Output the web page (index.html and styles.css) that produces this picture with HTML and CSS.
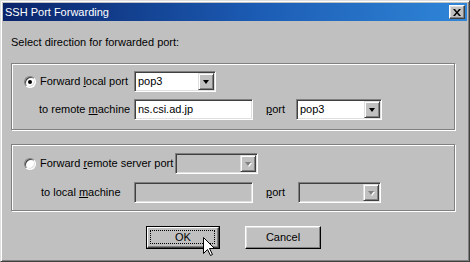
FILE: index.html
```html
<!DOCTYPE html>
<html>
<head>
<meta charset="utf-8">
<link rel="stylesheet" href="styles.css">
</head>
<body>
<div class="window">
  <div class="titlebar">
    <span class="title">SSH Port Forwarding</span>
    <span class="close"><svg width="8" height="7" viewBox="0 0 8 7"><path d="M0 0h2l2 2.5L6 0h2L5 3.5 8 7H6L4 4.5 2 7H0l3-3.5z" fill="#000"/></svg></span>
  </div>
  <div class="content">
    <div class="prompt">Select direction for forwarded port:</div>

    <div class="group g1">
      <div class="row">
        <span class="radio checked"></span>
        <span class="lbl l-local">Forward <u>l</u>ocal port</span>
        <div class="combo c-pop-a"><span class="val">pop3</span><span class="drop"><span class="tri"></span></span></div>
      </div>
      <div class="row">
        <span class="lbl l-to">to remote <u>m</u>achine</span>
        <div class="edit"><span class="val">ns.csi.ad.jp</span></div>
        <span class="lbl l-port"><u>p</u>ort</span>
        <div class="combo c-pop-b"><span class="val">pop3</span><span class="drop"><span class="tri"></span></span></div>
      </div>
    </div>

    <div class="group g2">
      <div class="row">
        <span class="radio"></span>
        <span class="lbl l-remote">Forward <u>r</u>emote server port</span>
        <div class="combo disabled c-rem"><span class="val"></span><span class="drop"><span class="tri"></span></span></div>
      </div>
      <div class="row">
        <span class="lbl l-to2">to local <u>m</u>achine</span>
        <div class="edit disabled"><span class="val"></span></div>
        <span class="lbl l-port2"><u>p</u>ort</span>
        <div class="combo disabled c-port2"><span class="val"></span><span class="drop"><span class="tri"></span></span></div>
      </div>
    </div>

    <div class="buttons">
      <div class="btn default"><span class="focus">OK</span></div>
      <div class="btn cancel"><span class="face">Cancel</span></div>
    </div>
  </div>
  <svg class="cursor" width="12" height="19" viewBox="0 0 12 19"><path d="M0.5 0.5V16.5L4.5 12.5L7.5 18.5L9.5 17.5L6.5 11.5H11.5Z" fill="#fff" stroke="#000" stroke-width="1" stroke-linejoin="miter"/></svg>
</div>
</body>
</html>
```
FILE: styles.css
```css
html, body {
  margin: 0;
  padding: 0;
  background: #c0c0c0;
}
.window {
  position: relative;
  width: 470px;
  height: 262px;
  box-sizing: border-box;
  padding: 1px;
  background: #c0c0c0;
  border-top: 1px solid #dfdfdf;
  border-left: 1px solid #dfdfdf;
  border-right: 1px solid #404040;
  border-bottom: 1px solid #404040;
  box-shadow: inset 1px 1px 0 #ffffff, inset -1px -1px 0 #808080;
  font-family: "Liberation Sans", Arial, sans-serif;
  font-size: 11px;
  color: #000;
  overflow: hidden;
}
.titlebar {
  margin: 1px;
  height: 18px;
  display: flex;
  align-items: center;
  background: linear-gradient(to right, #0a246a 0%, #1c5cb4 55%, #2f86d8 100%);
  color: #fff;
  padding-left: 2px;
}
.title {
  flex: 1;
  font-size: 11px;
  line-height: 18px;
  letter-spacing: 0;
}
.close {
  width: 16px;
  height: 14px;
  box-sizing: border-box;
  margin-right: 2px;
  background: #c0c0c0;
  border-top: 1px solid #ffffff;
  border-left: 1px solid #ffffff;
  border-right: 1px solid #404040;
  border-bottom: 1px solid #404040;
  box-shadow: inset -1px -1px 0 #808080, inset 1px 1px 0 #dfdfdf;
  display: flex;
  align-items: center;
  justify-content: center;
}
.close svg { display: block; margin-left: -1px; }
.content {
  padding: 14px 0 0 9px;
}
.prompt {
  line-height: 13px;
  height: 13px;
  padding-left: 0;
}
.group {
  margin-top: 14px;
  width: 444px;
  height: 67px;
  box-sizing: border-box;
  border: 1px solid #808080;
  box-shadow: inset 1px 1px 0 #ffffff, 1px 1px 0 #ffffff;
  display: flex;
  flex-direction: column;
  padding-top: 7px;
  gap: 7px;
}
.g2 {
  padding-top: 8px;
  gap: 8px;
}
.row {
  display: flex;
  align-items: center;
  height: 21px;
  padding-left: 12px;
}
.lbl {
  line-height: 13px;
  white-space: nowrap;
}
.radio {
  position: relative;
  width: 12px;
  height: 12px;
  box-sizing: border-box;
  border-radius: 50%;
  background: #fff;
  border: 1px solid;
  border-color: #808080 #ffffff #ffffff #808080;
  box-shadow: inset 1px 1px 0 #404040, inset -1px -1px 0 #dfdfdf;
  margin-right: 4px;
}
.radio.checked::after {
  content: "";
  position: absolute;
  left: 3px;
  top: 3px;
  width: 4px;
  height: 4px;
  border-radius: 50%;
  background: #000;
}
.l-local { width: 94px; }
.l-remote { width: 135px; }
.l-to { width: 95px; margin-left: 15px; }
.l-to2 { width: 93px; margin-left: 17px; }
.l-port { width: 30px; margin-left: 13px; }
.l-port2 { width: 32px; margin-left: 13px; }

.combo, .edit {
  height: 21px;
  box-sizing: border-box;
  background: #fff;
  border: 1px solid;
  border-color: #808080 #ffffff #ffffff #808080;
  box-shadow: inset 1px 1px 0 #404040, inset -1px -1px 0 #dfdfdf;
  display: flex;
  align-items: center;
  padding: 1px;
}
.combo.disabled, .edit.disabled { background: #c0c0c0; }
.val {
  flex: 1;
  padding-left: 2px;
  line-height: 17px;
}
.edit { width: 119px; }
.c-pop-a { width: 82px; }
.c-pop-b { width: 86px; }
.c-rem { width: 83px; }
.c-port2 { width: 83px; }
.drop {
  width: 16px;
  height: 17px;
  box-sizing: border-box;
  background: #c0c0c0;
  border-top: 1px solid #dfdfdf;
  border-left: 1px solid #dfdfdf;
  border-right: 1px solid #404040;
  border-bottom: 1px solid #404040;
  box-shadow: inset 1px 1px 0 #ffffff, inset -1px -1px 0 #808080;
  display: flex;
  align-items: center;
  justify-content: center;
}
.tri {
  width: 0;
  height: 0;
  border-left: 3.5px solid transparent;
  border-right: 3.5px solid transparent;
  border-top: 4px solid #000;
}
.disabled .tri {
  border-top-color: #808080;
  filter: drop-shadow(1px 1px 0 #ffffff);
}

.buttons {
  display: flex;
  margin-top: 15px;
  padding-left: 135px;
  gap: 25px;
}
.btn {
  height: 23px;
  box-sizing: border-box;
  background: #c0c0c0;
  text-align: center;
  line-height: 13px;
}
.btn.default {
  width: 74px;
  border: 1px solid #000;
  padding: 0;
}
.btn.default .focus {
  display: block;
  height: 21px;
  box-sizing: border-box;
  border-top: 1px solid #ffffff;
  border-left: 1px solid #ffffff;
  border-right: 1px solid #404040;
  border-bottom: 1px solid #404040;
  box-shadow: inset -1px -1px 0 #808080;
  position: relative;
  line-height: 19px;
}
.btn.default .focus::before {
  content: "";
  position: absolute;
  left: 2px;
  top: 2px;
  right: 3px;
  bottom: 3px;
  border: 1px dotted #000;
}
.btn.cancel {
  width: 76px;
  border-top: 1px solid #ffffff;
  border-left: 1px solid #ffffff;
  border-right: 1px solid #000;
  border-bottom: 1px solid #000;
  box-shadow: inset -1px -1px 0 #808080, inset 1px 1px 0 #dfdfdf;
  line-height: 21px;
}
.cursor {
  position: absolute;
  left: 202px;
  top: 236px;
}
```
